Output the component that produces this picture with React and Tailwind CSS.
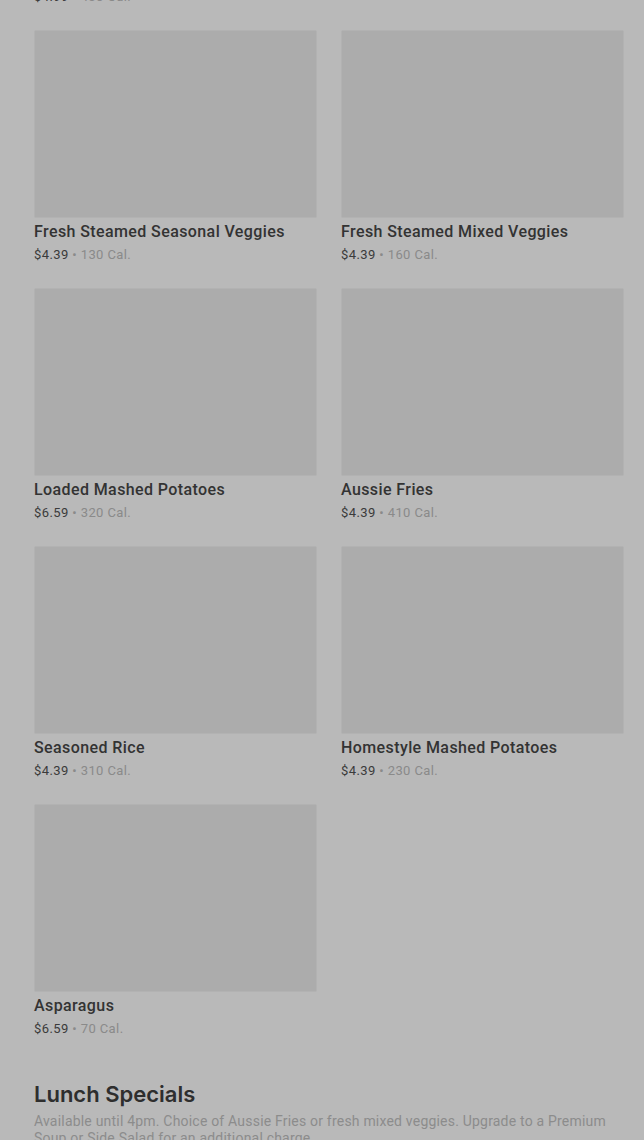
import React from "react";

const items = [
  { name: "Prev A", price: "$4.99", cal: "430 Cal." },
  null,
  { name: "Fresh Steamed Seasonal Veggies", price: "$4.39", cal: "130 Cal." },
  { name: "Fresh Steamed Mixed Veggies", price: "$4.39", cal: "160 Cal." },
  { name: "Loaded Mashed Potatoes", price: "$6.59", cal: "320 Cal." },
  { name: "Aussie Fries", price: "$4.39", cal: "410 Cal." },
  { name: "Seasoned Rice", price: "$4.39", cal: "310 Cal." },
  { name: "Homestyle Mashed Potatoes", price: "$4.39", cal: "230 Cal." },
  { name: "Asparagus", price: "$6.59", cal: "70 Cal." },
];

function Card({ item }) {
  return (
    <div className="flex flex-col">
      <div className="h-[188px] rounded-[2px] bg-[#acacac] border border-[#b2b2b2]" />
      <div className="mt-[3px] text-[16px] leading-[22px] font-medium text-[#333333] tracking-[0.4px]" style={{ fontFamily: "Roboto, sans-serif" }}>
        {item.name}
      </div>
      <div className="mt-[2px] text-[13px] leading-[20px] tracking-[0.4px]" style={{ fontFamily: "Roboto, sans-serif" }}>
        <span className="text-[#3b3b3b]">{item.price}</span>
        <span className="text-[#8a8a8a]"> • </span>
        <span className="text-[#8a8a8a]">{item.cal}</span>
      </div>
    </div>
  );
}

export default function App() {
  return (
    <div className="w-[644px] h-[1140px] overflow-hidden bg-[#b9b9b9]">
      <div className="pl-[34px] pr-[20px] mt-[-228px]">
        <div className="grid grid-cols-2 gap-x-[24px] gap-y-[23px]">
          {items.map((it, i) => (it ? <Card key={i} item={it} /> : <div key={i} />))}
        </div>
        <div className="mt-[40px]">
          <h2 className="text-[22px] leading-[30px] font-semibold text-[#2e2e2e] tracking-[0px]" style={{ fontFamily: "Inter, sans-serif" }}>
            Lunch Specials
          </h2>
          <p className="mt-[4px] text-[14px] leading-[17px] text-[#8c8c8c] tracking-[0.2px]" style={{ fontFamily: "Roboto, sans-serif" }}>
            Available until 4pm. Choice of Aussie Fries or fresh mixed veggies. Upgrade to a Premium Soup or Side Salad for an additional charge.
          </p>
        </div>
      </div>
    </div>
  );
}
